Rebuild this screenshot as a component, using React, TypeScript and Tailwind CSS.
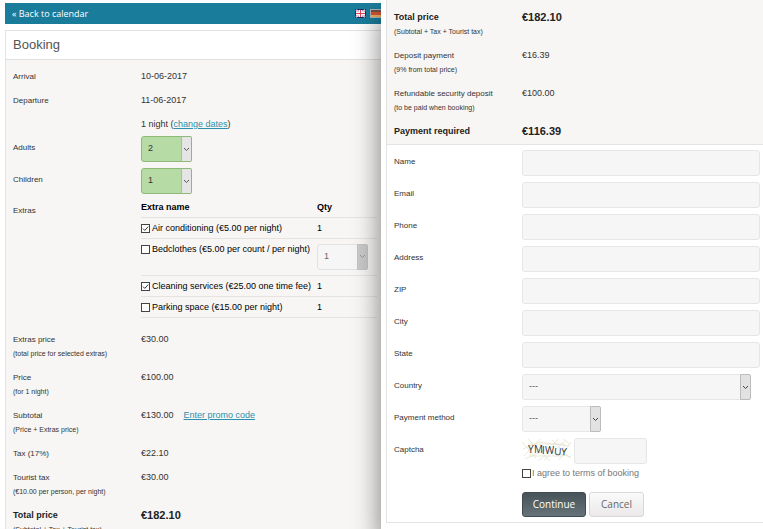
import type { ReactNode } from "react";
import clsx from "clsx";

const extras = [
  { id: "air", label: "Air conditioning (€5.00 per night)", checked: true },
  { id: "bed", label: "Bedclothes (€5.00 per count / per night)", checked: false, select: true },
  { id: "clean", label: "Cleaning services (€25.00 one time fee)", checked: true },
  { id: "park", label: "Parking space (€15.00 per night)", checked: false },
];

const prices = [
  { label: "Extras price", note: "(total price for selected extras)", value: "€30.00" },
  { label: "Price", note: "(for 1 night)", value: "€100.00" },
  { label: "Subtotal", note: "(Price + Extras price)", value: "€130.00", promo: true },
  { label: "Tax (17%)", value: "€22.10" },
  { label: "Tourist tax", note: "(€10.00 per person, per night)", value: "€30.00" },
  { label: "Total price", note: "(Subtotal + Tax + Tourist tax)", value: "€182.10", strong: true },
];

const payments = [
  { label: "Total price", note: "(Subtotal + Tax + Tourist tax)", value: "€182.10", strong: true },
  { label: "Deposit payment", note: "(9% from total price)", value: "€16.39" },
  { label: "Refundable security deposit", note: "(to be paid when booking)", value: "€100.00" },
  { label: "Payment required", value: "€116.39", strong: true },
];

const textFields = ["Name", "Email", "Phone", "Address", "ZIP", "City", "State"];

const inputClass = "h-[26px] rounded-[3px] border border-[#e6e6e6] bg-[#f6f6f6] px-2 text-[9px] text-[#333] outline-none";

type PriceRowProps = { label: string; note?: string; value: string; strong?: boolean; promo?: boolean };

function PriceRow({ label, note, value, strong, promo }: PriceRowProps) {
  return (
    <div className="grid grid-cols-[128px_1fr] leading-[15px]">
      <div className="whitespace-nowrap">
        <div className={strong ? "text-[9px] font-bold text-[#222]" : "text-[8px]"}>{label}</div>
        {note && <div className="text-[7px] leading-[14px]">{note}</div>}
      </div>
      <div className={strong ? "text-[11px] font-bold text-[#222]" : "text-[9px]"}>
        {value}
        {promo && (
          <a href="#promo" className="ml-[10px] text-[#2a90ad] underline">
            Enter promo code
          </a>
        )}
      </div>
    </div>
  );
}

function Field({ label, htmlFor, children }: { label: string; htmlFor?: string; children: ReactNode }) {
  return (
    <div className="grid grid-cols-[128px_1fr]">
      {htmlFor ? (
        <label htmlFor={htmlFor} className="pt-1 text-[8px] leading-[15px]">{label}</label>
      ) : (
        <div className="pt-[3px] text-[8px] leading-[15px]">{label}</div>
      )}
      <div className="min-w-0">{children}</div>
    </div>
  );
}

type SelectProps = { id: string; options: string[]; className: string; tone?: "green" | "plain" | "off"; label?: string };

function Select({ id, options, className, tone = "plain", label }: SelectProps) {
  return (
    <div className={clsx("relative", className)}>
      <select
        id={id}
        aria-label={label}
        disabled={tone === "off"}
        className={clsx(
          "block h-[26px] w-full appearance-none rounded-[3px] border pr-3 pl-[6px] text-[9px] outline-none",
          tone === "green" && "border-[#8dba78] bg-[#b7dba5] text-[#333]",
          tone === "plain" && "border-[#e6e6e6] bg-[#f6f6f6] text-[#555]",
          tone === "off" && "border-[#e2e2e2] bg-[#f6f6f6] text-[#666] opacity-100",
        )}
      >
        {options.map((o) => (
          <option key={o}>{o}</option>
        ))}
      </select>
      <span
        className={clsx(
          "pointer-events-none absolute top-0 right-0 flex h-[26px] w-[11px] items-center justify-center rounded-r-[2px] border",
          tone === "green" && "border-[#8dba78] border-l-[#b4b4b4] bg-[#e6e5e6] text-[#555]",
          tone === "plain" && "border-[#bcbcbc] bg-[#e2e2e2] text-[#444]",
          tone === "off" && "border-[#c4c4c4] bg-[#c9c9c9] text-[#999]",
        )}
      >
        <svg width="7" height="5" viewBox="0 0 7 5" fill="none" stroke="currentColor">
          <path d="M1 1l2.5 2.5L6 1" />
        </svg>
      </span>
    </div>
  );
}

function Checkbox({ id, checked }: { id: string; checked?: boolean }) {
  return (
    <span className="relative block size-[9px] shrink-0">
      <input
        id={id}
        type="checkbox"
        defaultChecked={checked}
        className="peer block size-[9px] appearance-none border border-[#444] bg-white"
      />
      <svg
        viewBox="0 0 9 9"
        fill="none"
        stroke="#333"
        className="pointer-events-none absolute inset-0 hidden size-[9px] peer-checked:block"
      >
        <path d="M2 4.6l1.8 1.8L7.2 2.6" />
      </svg>
    </span>
  );
}

function FlagUK() {
  return (
    <svg width="11" height="9" viewBox="0 0 11 9">
      <path fill="#1d2b66" d="M0 0h11v9H0z" />
      <path fill="#7f86b5" d="M1 1h9v7H1z" />
      <path stroke="#fff" strokeWidth="1.8" d="M1 1l9 7M10 1L1 8" />
      <path stroke="#e0707f" strokeWidth=".7" d="M1 1l9 7M10 1L1 8" />
      <path fill="#fff" d="M4 1h3v7H4zM1 3h9v3H1z" />
      <path fill="#dc3f55" d="M5 1h1v7H5zM1 4h9v1H1z" />
    </svg>
  );
}

function FlagDE() {
  return (
    <svg width="11" height="9" viewBox="0 0 11 9">
      <path fill="#a9b4b8" d="M0 0h11v9H0z" />
      <path fill="#6b5049" d="M1 1h10v2H1z" />
      <path fill="#d4532f" d="M1 3h10v3H1z" />
      <path fill="#e8b066" d="M1 6h10v2H1z" />
    </svg>
  );
}

function Captcha() {
  return (
    <svg width="50" height="24" viewBox="0 0 50 24" role="img" aria-label="Captcha code" className="shrink-0">
      <g fill="none" stroke="#e6e3cf" strokeWidth=".8">
        <path d="M0 4l14 16M2 18L18 1M8 6h34v12H8zM6 1l22 22M22 22L44 2M30 2l18 18M37 22L49 4M1 11l16-7 30 4M3 21l20-9 26 7M42 1l6 6M16 23l8-6M36 1l-9 12" />
      </g>
      <g fontFamily="Open Sans, sans-serif" fontSize="10" fill="#33332f">
        <text x="6" y="15">Y</text>
        <text x="12" y="15">M</text>
        <text x="20" y="16">I</text>
        <text x="23" y="16">W</text>
        <text x="32" y="17" transform="rotate(3 32 17)">U</text>
        <text x="39" y="17" transform="rotate(3 39 17)">Y</text>
      </g>
    </svg>
  );
}

function BookingPanel() {
  return (
    <section className="min-w-0 overflow-hidden pt-[3px] pl-[5px]">
      <header className="flex h-[21px] items-center justify-between bg-[#1a7c9b] pl-[7px]">
        <a href="#calendar" className="font-['Open_Sans',sans-serif] text-[9px] text-white">« Back to calendar</a>
        <div className="flex gap-1">
          <FlagUK />
          <FlagDE />
        </div>
      </header>
      <div className="mt-[6px] border-t border-l border-[#e3e3e3] bg-[#f8f6f4]">
        <h1 className="border-b border-[#e0e0e0] bg-white pl-[7px] text-[13px] leading-[28px] text-[#555]">Booking</h1>
        <div className="pt-[9px] pr-1 pl-[7px]">
          <div className="grid grid-cols-[128px_1fr] gap-y-[9px] text-[9px] leading-[15px]">
            <div className="text-[8px]">Arrival</div>
            <div>10-06-2017</div>
            <div className="text-[8px]">Departure</div>
            <div>11-06-2017</div>
            <div className="col-start-2">
              1 night (<a href="#dates" className="text-[#2a90ad] underline">change dates</a>)
            </div>
          </div>
          <div className="mt-1 flex flex-col gap-[6px]">
            <Field label="Adults" htmlFor="adults">
              <Select id="adults" options={["2", "1", "3"]} tone="green" className="w-[51px]" />
            </Field>
            <Field label="Children" htmlFor="children">
              <Select id="children" options={["1", "0", "2"]} tone="green" className="w-[51px]" />
            </Field>
            <Field label="Extras">
              <table className="w-full table-fixed text-left text-[9px] text-black">
                <thead>
                  <tr className="h-[17px] border-b border-[#e6e3e1]">
                    <th className="pb-px leading-[15px] font-bold">Extra name</th>
                    <th className="w-[60px] pb-px leading-[15px] font-bold">Qty</th>
                  </tr>
                </thead>
                <tbody>
                  {extras.map((e) => (
                    <tr key={e.id} className="h-[21px] border-b border-[#e6e3e1] align-top">
                      <td className="pt-1">
                        <label htmlFor={e.id} className="flex items-center gap-[2px] leading-[13px] whitespace-nowrap">
                          <Checkbox id={e.id} checked={e.checked} />
                          {e.label}
                        </label>
                      </td>
                      <td className={e.select ? "py-[5px]" : "pt-1 leading-[13px]"}>
                        {e.select ? <Select id="bed-qty" label="Quantity" options={["1", "2"]} tone="off" className="w-[51px]" /> : "1"}
                      </td>
                    </tr>
                  ))}
                </tbody>
              </table>
            </Field>
          </div>
          <div className="mt-[14px] flex flex-col gap-[9px]">
            {prices.map((p) => (
              <PriceRow key={p.label} {...p} />
            ))}
          </div>
        </div>
      </div>
    </section>
  );
}

function CheckoutPanel() {
  return (
    <section className="relative z-10 min-w-0 bg-white pl-[5px] shadow-[-2px_14px_24px_0px_rgba(0,0,0,0.45)]">
      <form className="border-b border-l border-[#e3e3e3]">
        <div className="flex flex-col gap-[9px] border-b border-[#e3e3e3] bg-[#f8f6f4] pt-[10px] pb-[5px] pl-[7px]">
          {payments.map((p) => (
            <PriceRow key={p.label} {...p} />
          ))}
        </div>
        <div className="flex flex-col gap-[6px] pt-[5px] pr-[3px] pl-[7px]">
          {textFields.map((f) => (
            <Field key={f} label={f} htmlFor={f}>
              <input id={f} type="text" className={clsx(inputClass, "block w-full")} />
            </Field>
          ))}
          <Field label="Country" htmlFor="country">
            <Select id="country" options={["---"]} className="mr-[9px]" />
          </Field>
          <Field label="Payment method" htmlFor="method">
            <Select id="method" options={["---"]} className="w-[79px]" />
          </Field>
          <Field label="Captcha" htmlFor="captcha">
            <div className="flex gap-[2px]">
              <Captcha />
              <input id="captcha" type="text" className={clsx(inputClass, "w-[73px]")} />
            </div>
          </Field>
        </div>
        <div className="pt-[3px] pb-[5px] pl-[135px]">
          <label htmlFor="terms" className="flex items-center gap-px text-[9px] leading-[13px] text-[#777]">
            <Checkbox id="terms" />
            I agree to terms of booking
          </label>
          <div className="mt-3 flex gap-[3px] font-['Open_Sans',sans-serif] text-[10px]">
            <button
              type="button"
              className="h-[25px] w-16 rounded-[3px] border border-[#3f4c51] bg-linear-to-b from-[#46545a] to-[#667479] text-white"
            >
              Continue
            </button>
            <button
              type="button"
              className="h-[25px] w-[55px] rounded-[3px] border border-[#d8d8d8] bg-linear-to-b from-[#fafafa] to-[#ebe9e9] text-[#666]"
            >
              Cancel
            </button>
          </div>
        </div>
      </form>
    </section>
  );
}

export default function App() {
  return (
    <main className="grid h-screen grid-cols-[381fr_382fr] overflow-hidden bg-white font-['Liberation_Sans',Arial,sans-serif] text-[#333]">
      <BookingPanel />
      <CheckoutPanel />
    </main>
  );
}
